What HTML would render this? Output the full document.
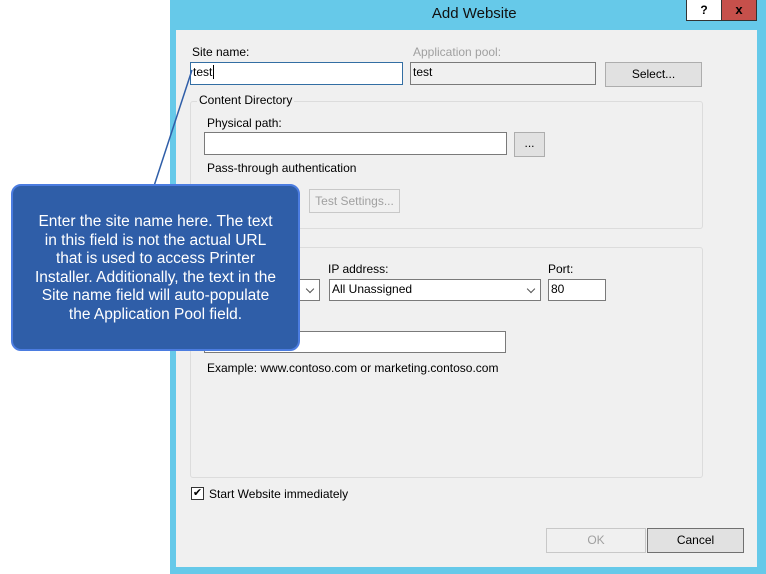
<!DOCTYPE html>
<html><head><meta charset="utf-8"><style>
*{margin:0;padding:0;box-sizing:border-box}
body{width:766px;height:574px;background:#fff;position:relative;overflow:hidden;font-family:"Liberation Sans",sans-serif;font-size:12px;color:#000}
.a{position:absolute}
.inp{position:absolute;background:#fff;border:1px solid #7a7a7a;padding:2px 0 0 2px}
.btn{position:absolute;background:#e1e1e1;border:1px solid #adadad;text-align:center}
.grp{position:absolute;border:1px solid #dcdcdc;border-radius:3px}
.lbl{position:absolute;background:#f0f0f0;padding:0 2px}
.dd::after{content:"";position:absolute;right:6px;top:6px;width:5px;height:5px;border-right:1.5px solid #555;border-bottom:1.5px solid #555;transform:rotate(45deg)}
</style></head><body>
<div class="a" style="left:170px;top:0;width:596px;height:574px;background:#66c9e9"></div>
<div class="a" style="left:170px;top:5px;width:596px;text-align:center;font-size:15px;color:#111">&nbsp;&nbsp;&nbsp;Add Website</div>
<div class="a" style="left:686px;top:0;width:36px;height:21px;background:#fff;border:1px solid #333;border-top:0;text-align:center;font-weight:bold;font-size:12px;line-height:20px">?</div>
<div class="a" style="left:722px;top:0;width:35px;height:21px;background:#c6504b;border:1px solid #333;border-top:0;border-left:0;text-align:center;font-weight:bold;font-size:13px;line-height:19px">x</div>
<div class="a" style="left:176px;top:30px;width:581px;height:537px;background:#f0f0f0"></div>

<div class="a" style="left:192px;top:45px">Site name:</div>
<div class="inp" style="left:190px;top:62px;width:213px;height:23px;border-color:#336ea3">test<span style="border-left:1px solid #000;margin-left:1px"></span></div>
<div class="a" style="left:413px;top:45px;color:#a0a0a0">Application pool:</div>
<div class="inp" style="left:410px;top:62px;width:186px;height:23px;background:#f0f0f0">test</div>
<div class="btn" style="left:605px;top:62px;width:97px;height:25px;line-height:23px">Select...</div>

<div class="grp" style="left:190px;top:101px;width:513px;height:128px"></div>
<div class="lbl" style="left:197px;top:93px">Content Directory</div>
<div class="a" style="left:207px;top:116px">Physical path:</div>
<div class="inp" style="left:204px;top:132px;width:303px;height:23px"></div>
<div class="btn" style="left:514px;top:132px;width:31px;height:25px;line-height:21px">...</div>
<div class="a" style="left:207px;top:161px">Pass-through authentication</div>
<div class="btn" style="left:309px;top:189px;width:91px;height:24px;line-height:22px;color:#a0a0a0;background:#f0f0f0;border-color:#c8c8c8">Test Settings...</div>

<div class="grp" style="left:190px;top:247px;width:513px;height:231px"></div>
<div class="inp dd" style="left:204px;top:279px;width:116px;height:22px"></div>
<div class="a" style="left:328px;top:262px">IP address:</div>
<div class="inp dd" style="left:329px;top:279px;width:212px;height:22px">All Unassigned</div>
<div class="a" style="left:548px;top:262px">Port:</div>
<div class="inp" style="left:548px;top:279px;width:58px;height:22px">80</div>
<div class="inp" style="left:204px;top:331px;width:302px;height:22px"></div>
<div class="a" style="left:207px;top:361px">Example: www.contoso.com or marketing.contoso.com</div>

<div class="a" style="left:191px;top:487px;width:13px;height:13px;border:1px solid #333;background:#fff;font-size:11px;line-height:11px;text-align:center">✔</div>
<div class="a" style="left:209px;top:487px">Start Website immediately</div>
<div class="btn" style="left:546px;top:528px;width:100px;height:25px;line-height:23px;color:#a0a0a0;background:#f0f0f0;border-color:#c8c8c8">OK</div>
<div class="btn" style="left:647px;top:528px;width:97px;height:25px;line-height:23px;border-color:#707070">Cancel</div>

<svg class="a" style="left:0;top:0" width="766" height="574"><line x1="192" y1="70" x2="154" y2="186" stroke="#2f5ea8" stroke-width="1.5"/></svg>
<div class="a" style="left:11px;top:184px;width:289px;height:167px;background:#2f5ea8;border:2px solid #4b7ce0;border-radius:10px;color:#fff;font-size:15.5px;line-height:18.5px;text-align:center;padding-top:27px">Enter the site name here. The text<br>in this field is not the actual URL<br>that is used to access Printer<br>Installer. Additionally, the text in the<br>Site name field will auto-populate<br>the Application Pool field.</div>
</body></html>
